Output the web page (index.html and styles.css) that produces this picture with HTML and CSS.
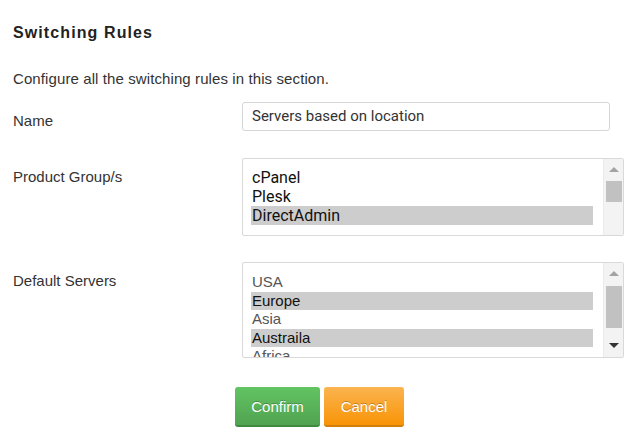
FILE: index.html
```html
<!DOCTYPE html>
<html>
<head>
<meta charset="utf-8">
<link rel="stylesheet" href="styles.css">
</head>
<body>
<div class="page">
  <h1 class="title">Switching Rules</h1>
  <p class="desc">Configure all the switching rules in this section.</p>
  <div class="form">
    <div class="row row-name">
      <label class="label">Name</label>
      <div class="input">Servers based on location</div>
    </div>
    <div class="row row-groups">
      <label class="label">Product Group/s</label>
      <div class="list list-groups">
        <div class="items">
          <div class="item">cPanel</div>
          <div class="item">Plesk</div>
          <div class="item sel">DirectAdmin</div>
        </div>
        <div class="sb">
          <span class="arrow up"></span>
          <span class="thumb thumb-groups"></span>
        </div>
      </div>
    </div>
    <div class="row row-servers">
      <label class="label">Default Servers</label>
      <div class="list list-servers">
        <div class="items">
          <div class="item">USA</div>
          <div class="item sel">Europe</div>
          <div class="item">Asia</div>
          <div class="item sel">Austraila</div>
          <div class="item">Africa</div>
        </div>
        <div class="sb">
          <span class="arrow up"></span>
          <span class="thumb thumb-servers"></span>
          <span class="arrow down"></span>
        </div>
      </div>
    </div>
  </div>
  <div class="actions">
    <button class="btn btn-confirm">Confirm</button>
    <button class="btn btn-cancel">Cancel</button>
  </div>
</div>
</body>
</html>
```
FILE: styles.css
```css
* { box-sizing: border-box; }
html, body { margin: 0; padding: 0; background: #fff; }
body {
  font-family: "Liberation Sans", Arial, sans-serif;
  color: #333;
  width: 632px;
  height: 446px;
  overflow: hidden;
}
.page { padding: 23px 0 0 13px; }
.title {
  margin: 0;
  font-size: 16px;
  line-height: 19px;
  font-weight: bold;
  letter-spacing: 1.1px;
  color: #222;
}
.desc {
  margin: 28px 0 0;
  font-size: 15px;
  line-height: 17px;
  letter-spacing: 0.1px;
  color: #333;
}
.form { margin-top: 15px; display: flex; flex-direction: column; }
.row { display: flex; align-items: flex-start; }
.row-groups { margin-top: 27px; }
.row-servers { margin-top: 26px; }
.label {
  width: 229px;
  flex: none;
  padding-top: 10px;
  font-size: 15px;
  line-height: 17px;
  color: #333;
}
.input {
  width: 368px;
  height: 29px;
  border: 1px solid #d6d6d6;
  border-radius: 3px;
  padding: 0 9px;
  font-family: Roboto, "Liberation Sans", sans-serif;
  font-size: 15px;
  line-height: 27px;
  color: #333;
}
.list {
  width: 382px;
  border: 1px solid #d9d9d9;
  border-radius: 2px;
  display: flex;
  overflow: hidden;
}
.list-groups { height: 78px; }
.list-servers { height: 96px; }
.items { flex: 1; padding: 9px 10px 0 8px; overflow: hidden; }
.list-servers .items { padding-top: 10px; }
.item {
  padding-left: 1px;
}
.list-groups .item {
  font-family: Roboto, "Liberation Sans", sans-serif;
  font-size: 16px;
  color: #111;
  height: 19px;
  line-height: 19px;
}
.list-servers .item {
  font-size: 15px;
  color: #555;
  height: 18.5px;
  line-height: 18.5px;
}
.list-servers .item.sel { color: #111; }
.item.sel { background: #cdcdcd; }
.sb {
  width: 20px;
  flex: none;
  background-color: #f3f3f3;
  background-image: radial-gradient(#e3e3e3 0.6px, transparent 0.7px);
  background-size: 2px 2px;
  border-left: 1px solid #ebebeb;
  position: relative;
}
.arrow {
  position: absolute;
  left: 5px;
  width: 0;
  height: 0;
  border-left: 5px solid transparent;
  border-right: 5px solid transparent;
}
.arrow.up { top: 8px; border-bottom: 5px solid #a3a3a3; }
.arrow.down { bottom: 9px; border-top: 5px solid #333; }
.thumb {
  position: absolute;
  left: 2px;
  width: 16px;
  background: #c1c1c1;
}
.thumb-groups { top: 22px; height: 21px; }
.thumb-servers { top: 23px; height: 42px; }
.actions {
  display: flex;
  gap: 4px;
  margin: 29px 0 0 222px;
}
.btn {
  height: 40px;
  border: none;
  border-radius: 3px;
  font-family: "Liberation Sans", Arial, sans-serif;
  font-size: 15px;
  color: #fff;
  text-shadow: 0 -1px 0 rgba(0,0,0,0.25);
  padding: 0;
  cursor: pointer;
}
.btn-confirm {
  width: 85px;
  background: linear-gradient(#62c462, #51a351);
  border-bottom: 2px solid #3f8a3f;
}
.btn-cancel {
  width: 80px;
  background: linear-gradient(#fbb450, #f89406);
  border-bottom: 2px solid #d27e08;
}
```
